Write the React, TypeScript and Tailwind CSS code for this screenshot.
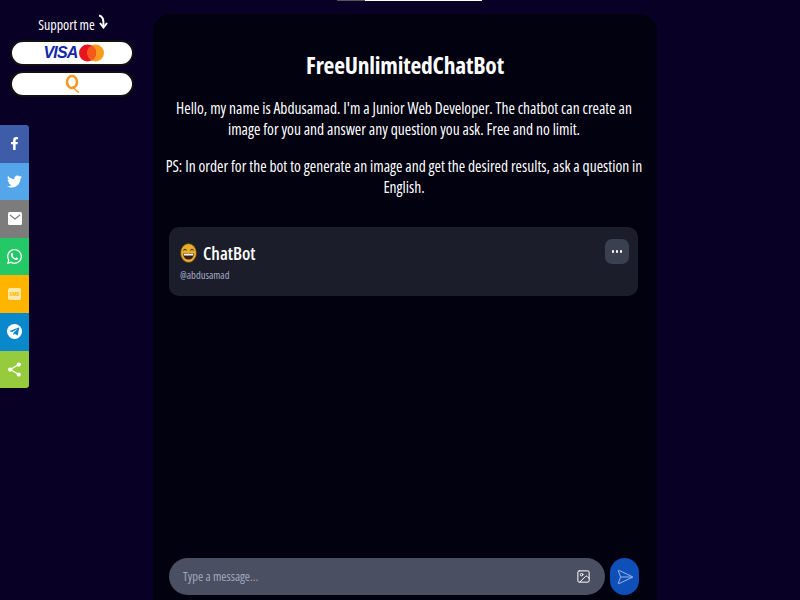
import { FaFacebookF, FaTwitter, FaWhatsapp, FaTelegramPlane } from 'react-icons/fa';
import { MdShare } from 'react-icons/md';
import { Image, SendHorizontal } from 'lucide-react';
import type { ReactNode } from 'react';

const SHARE: { bg: string; icon: ReactNode }[] = [
  { bg: 'bg-[#3f5ca8]', icon: <FaFacebookF className="text-[13px] text-white" /> },
  { bg: 'bg-[#55a5ea]', icon: <FaTwitter className="text-[15px] text-white" /> },
  {
    bg: 'bg-[#7c7c7c]',
    icon: (
      <svg width="14" height="13" viewBox="0 0 14 13">
        <rect width="14" height="13" rx="1.5" fill="#fff" />
        <path d="M2 3 L7 7 L12 3" fill="none" stroke="#7c7c7c" strokeWidth="1.2" />
      </svg>
    ),
  },
  { bg: 'bg-[#25c866]', icon: <FaWhatsapp className="text-[17px] text-white" /> },
  {
    bg: 'bg-[#ffb400]',
    icon: (
      <span className="flex h-[12px] w-[13px] items-center justify-center rounded-[2px] bg-[#ffe9a8] text-[6px] font-bold leading-none text-[#ffb400]">
        SMS
      </span>
    ),
  },
  {
    bg: 'bg-[#0a88cc]',
    icon: (
      <span className="flex h-[15px] w-[15px] items-center justify-center rounded-full bg-white">
        <FaTelegramPlane className="-ml-[1px] text-[11px] text-[#0a88cc]" />
      </span>
    ),
  },
  { bg: 'bg-[#95cb3c]', icon: <MdShare className="text-[17px] text-white" /> },
];

function Smiley() {
  return (
    <svg width="17" height="20" viewBox="0 0 17 20" className="shrink-0">
      <ellipse cx="8.5" cy="10" rx="8" ry="9.5" fill="#e9ad2e" stroke="#4a3a12" strokeWidth="0.8" />
      <path d="M3.5 7.5 Q5 5 6.5 7.5 M10.5 7.5 Q12 5 13.5 7.5" fill="none" stroke="#40300c" strokeWidth="1.2" />
      <path d="M3 10.5 H14 Q13.5 16.5 8.5 16.5 Q3.5 16.5 3 10.5 Z" fill="#3a1d10" />
      <path d="M3.6 10.8 H13.4 L13 12.6 H4 Z" fill="#fff" />
    </svg>
  );
}

export default function App() {
  return (
    <div className="relative flex h-[600px] w-[800px] overflow-hidden bg-[#090026] font-['Open_Sans',sans-serif] [font-stretch:75%] text-white">
      {/* sliver of the banner that is scrolled off */}
      <div className="absolute left-[337px] top-0 flex h-[1px]">
        <div className="w-[28px] bg-[#55555f]" />
        <div className="w-[117px] bg-white" />
      </div>

      <aside className="w-[153px] shrink-0">
        <div className="mt-[15px] flex w-[144px] flex-col items-center">
          <div className="flex h-[18px] items-center gap-[3px] pl-[2px] text-[14px]">
            Support me
            <svg width="10" height="15" viewBox="0 0 10 15" className="-mt-[5px]">
              <path d="M1 1.5 Q6 2 5.5 12" fill="none" stroke="#fff" strokeWidth="2" />
              <path d="M2 9 L5.5 13.5 L9 9" fill="none" stroke="#fff" strokeWidth="2" />
            </svg>
          </div>
          <div className="mt-[7px] flex h-[26px] w-[124px] items-center justify-center gap-[1px] rounded-full border-2 border-[#111] bg-white pl-[3px]">
            <span className="font-['Liberation_Sans',sans-serif] text-[16px] font-bold italic leading-none tracking-[-0.8px] text-[#1327a8]">
              VISA
            </span>
            <svg width="25" height="20" viewBox="0 0 25 20">
              <circle cx="16.5" cy="10" r="8.5" fill="#f99b1c" />
              <circle cx="8.5" cy="10" r="8.5" fill="#e8141f" />
              <path d="M12.5 2.5 A8.5 8.5 0 0 1 12.5 17.5 A8.5 8.5 0 0 1 12.5 2.5 Z" fill="#f5581c" />
            </svg>
          </div>
          <div className="mt-[5px] flex h-[26px] w-[124px] items-center justify-center rounded-full border-2 border-[#111] bg-white">
            <svg width="15" height="20" viewBox="0 0 15 20">
              <ellipse cx="7" cy="8" rx="5" ry="6" fill="none" stroke="#f39a22" strokeWidth="2.6" />
              <path d="M8 12 Q9.5 16 14 18.5" fill="none" stroke="#f39a22" strokeWidth="1.4" />
            </svg>
          </div>
        </div>

        <div className="mt-[28px] w-[29px] overflow-hidden rounded-r-[3px]">
          {SHARE.map((s, i) => (
            <div key={i} className={`flex h-[37.6px] items-center justify-center ${s.bg}`}>
              {s.icon}
            </div>
          ))}
        </div>
      </aside>

      <main className="mt-[14px] flex h-[586px] w-[504px] shrink-0 flex-col rounded-t-[18px] bg-[#01010f] px-[16px]">
        <h1 className="mt-[36px] text-center text-[23.5px] font-bold leading-[30px] tracking-[-0.2px]">FreeUnlimitedChatBot</h1>
        <p className="mt-[18px] pl-[2px] pr-[4px] text-center text-[15.5px] leading-[21px]">
          Hello, my name is Abdusamad. I'm a Junior Web Developer. The chatbot can create an image for you and answer any question you ask. Free and no limit.
        </p>
        <p className="-ml-[7px] -mr-[5px] mt-[16px] text-center text-[15.5px] leading-[21px]">
          PS: In order for the bot to generate an image and get the desired results, ask a question in English.
        </p>

        <div className="mt-[29px] flex h-[69px] w-[469px] items-start justify-between rounded-[10px] bg-[#1b1e2a] pl-[11px] pr-[9px] pt-[13px]">
          <div>
            <div className="flex items-center gap-[6px]">
              <Smiley />
              <span className="text-[18px] font-semibold leading-[26px]">ChatBot</span>
            </div>
            <div className="mt-[2px] text-[10.5px] leading-[14px] text-[#a3a9c4]">@abdusamad</div>
          </div>
          <div className="-mt-[1px] flex h-[25px] w-[24px] items-center justify-center gap-[1.5px] rounded-[7px] bg-[#3a4050]">
            <span className="h-[2.5px] w-[2.5px] rounded-full bg-white" />
            <span className="h-[2.5px] w-[2.5px] rounded-full bg-white" />
            <span className="h-[2.5px] w-[2.5px] rounded-full bg-white" />
          </div>
        </div>

        <div className="flex-1" />

        <div className="mb-[5px] flex w-[470px] items-center gap-[5px]">
          <div className="flex h-[37px] w-[436px] items-center justify-between rounded-full bg-[#4a4f62] pl-[14px] pr-[14px]">
            <span className="pt-[1px] text-[12.5px] text-[#a3a8bd]">Type a message...</span>
            <Image size={15} strokeWidth={1.6} className="text-white" />
          </div>
          <div className="flex h-[37px] w-[29px] items-center justify-center rounded-full bg-[#0f4fb8]">
            <SendHorizontal size={18} strokeWidth={1.3} className="text-[#9db9ea]" />
          </div>
        </div>
      </main>
    </div>
  );
}
